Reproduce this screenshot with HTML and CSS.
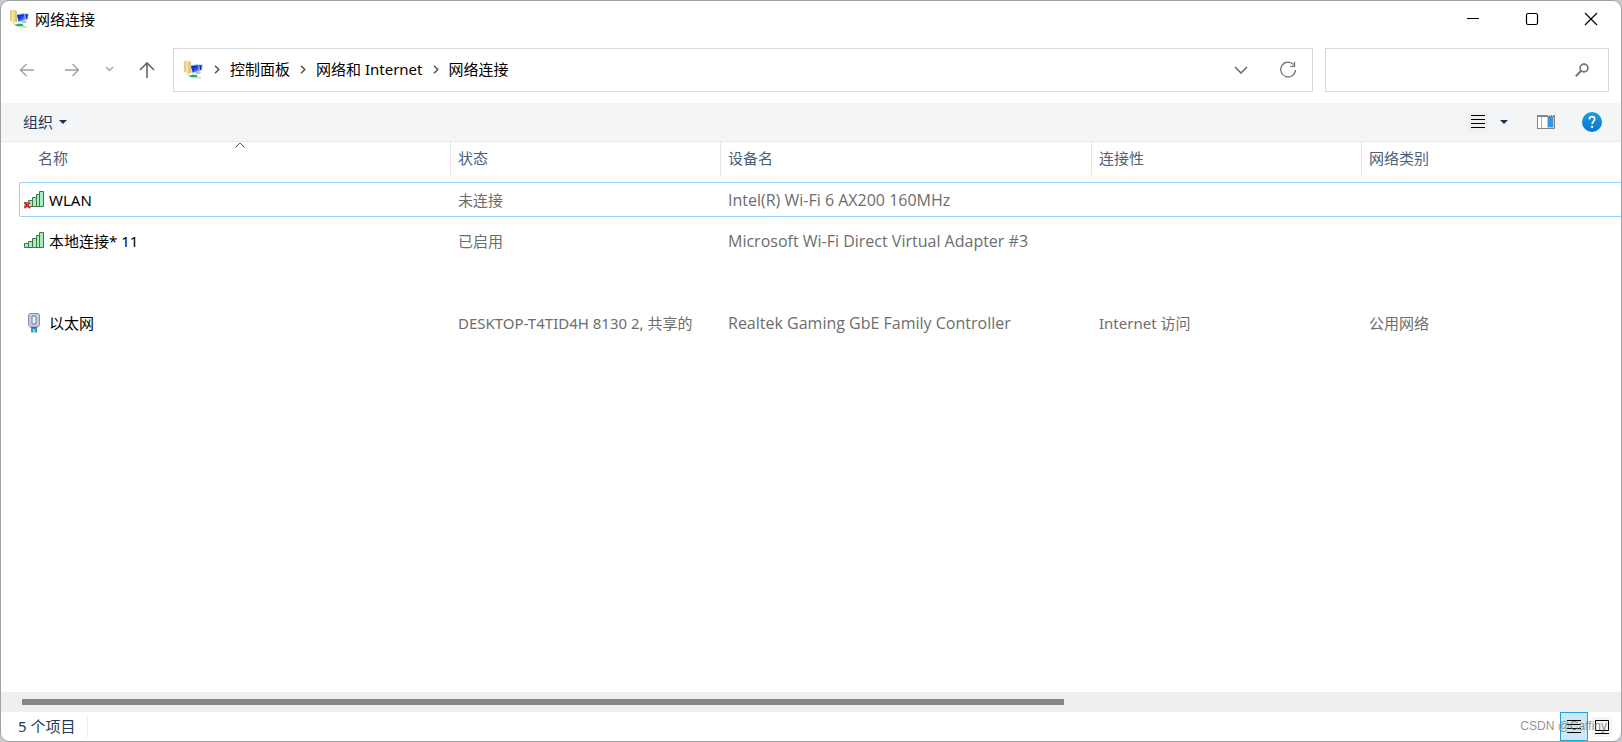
FILE: index.html
```html
<!DOCTYPE html>
<html lang="zh-CN">
<head>
<meta charset="utf-8">
<title>网络连接</title>
<link rel="stylesheet" href="styles.css">
</head>
<body>
<svg class="defs" aria-hidden="true">
  <defs>
    <linearGradient id="folder-fill" x1="0" y1="0" x2="1" y2="0"><stop offset="0" stop-color="#fbeeb0"/><stop offset="1" stop-color="#dcb75c"/></linearGradient>
    <linearGradient id="screen-fill" x1="0" y1="0" x2="1" y2="1"><stop offset="0" stop-color="#0a1a9c"/><stop offset=".5" stop-color="#1c3fe0"/><stop offset="1" stop-color="#9fd0ff"/></linearGradient>
    <linearGradient id="help-fill" x1="0" y1="0" x2="0" y2="1"><stop offset="0" stop-color="#1b9de2"/><stop offset="1" stop-color="#0a74d0"/></linearGradient>
    <symbol id="net-folder" viewBox="0 0 20 20">
      <path d="M0 1h5l1 2v10l-6-1z" fill="#e9cf7c"/>
      <path d="M2 0l5 2v11l-5 1z" fill="url(#folder-fill)"/>
      <path d="M12 4l7 .5-1 6-6 1z" fill="#c3d3ea"/>
      <path d="M13 5l5 .3-.8 4.700-4.200.6z" fill="#1531c4"/>
      <path d="M6 5l9-1 1 7.500-8 2z" fill="#c6d7ee"/>
      <path d="M7 6l7.200-1 1 6-6.600 1.500z" fill="url(#screen-fill)"/>
      <path d="M11 12.500l5-1 1 2-5 1z" fill="#b8c3d2"/>
      <path d="M3 14.500l4 1.500M13 18h4" stroke="#b9c7c2"/>
      <path d="M5 16l4-1.500 4 .8.500 1.500-3.500.8-4-.5z" fill="#20b35c"/>
      <path d="M10 16.500l5 1-3 .5z" fill="#8bdcae"/>
    </symbol>
    <symbol id="bars" viewBox="0 0 20 16">
      <g fill="#a4efbb" stroke="#46714f">
        <path d="M.5 11.500h4v4h-4zM4.500 9.500h4v6h-4zM8.500 6.500h4v9h-4zM12.500 3.500h3v12h-3zM15.500.500h4v15h-4z"/>
      </g>
    </symbol>
    <symbol id="chevron-right" viewBox="0 0 6 9"><path d="M1 .7l3.800 3.800L1 8.300" fill="none" stroke="#555" stroke-width="1.500"/></symbol>
  </defs>
</svg>
<main class="window">
  <header class="titlebar">
    <svg class="net-icon"><use href="#net-folder"/></svg>
    <h1 class="title">网络连接</h1>
    <div class="caption-buttons">
      <button class="caption" aria-label="最小化"><svg width="14" height="14" viewBox="0 0 14 14"><path d="M1 6.500h12" stroke="#000"/></svg></button>
      <button class="caption" aria-label="最大化"><svg width="14" height="14" viewBox="0 0 14 14"><rect x="1.500" y="1.500" width="11" height="11" rx="1.500" fill="none" stroke="#000" stroke-width="1.200"/></svg></button>
      <button class="caption" aria-label="关闭"><svg width="14" height="14" viewBox="0 0 14 14"><path d="M1 1l12 12M13 1L1 13" stroke="#000" stroke-width="1.200"/></svg></button>
    </div>
  </header>

  <nav class="navbar">
    <div class="history">
      <button class="nav-button" aria-label="后退"><svg width="16" height="16" viewBox="0 0 16 16"><path d="M15 8H1.500M7.500 2l-6 6 6 6" fill="none" stroke="#a0a0a0" stroke-width="1.300"/></svg></button>
      <button class="nav-button" aria-label="前进"><svg width="16" height="16" viewBox="0 0 16 16"><path d="M1 8h13.500M8.500 2l6 6-6 6" fill="none" stroke="#a0a0a0" stroke-width="1.300"/></svg></button>
      <button class="nav-button recent" aria-label="最近浏览的位置"><svg width="9" height="16" viewBox="0 0 9 16"><path d="M1 5l3.500 3.500L8 5" fill="none" stroke="#a0a0a0" stroke-width="1.300"/></svg></button>
      <button class="nav-button up" aria-label="上移"><svg width="16" height="18" viewBox="0 0 16 18"><path d="M8 17V2M1 9l7-7 7 7" fill="none" stroke="#686868" stroke-width="1.600"/></svg></button>
    </div>
    <div class="address">
      <svg class="net-icon"><use href="#net-folder"/></svg>
      <ol class="crumbs">
        <li><svg class="crumb-arrow"><use href="#chevron-right"/></svg><a href="#">控制面板</a></li>
        <li><svg class="crumb-arrow"><use href="#chevron-right"/></svg><a href="#">网络和 Internet</a></li>
        <li><svg class="crumb-arrow"><use href="#chevron-right"/></svg><a href="#">网络连接</a></li>
      </ol>
      <button class="address-button" aria-label="以前的位置"><svg width="14" height="8" viewBox="0 0 14 8"><path d="M1 1l6 6 6-6" fill="none" stroke="#666" stroke-width="1.500"/></svg></button>
      <button class="address-button" aria-label="刷新"><svg width="18" height="18" viewBox="0 0 18 18"><path d="M14.500 3.500A7.400 7.400 0 1 0 16.500 9M15.500 1v4.300h-4.300" fill="none" stroke="#737373" stroke-width="1.300"/></svg></button>
    </div>
    <div class="search">
      <input class="search-input" type="text" aria-label="搜索">
      <svg width="14" height="14" viewBox="0 0 14 14"><circle cx="9" cy="5" r="3.900" fill="none" stroke="#737373" stroke-width="1.700"/><path d="M6.200 7.800L.8 13.200" stroke="#737373" stroke-width="2"/></svg>
    </div>
  </nav>

  <div class="toolbar">
    <button class="organize">组织<svg width="8" height="4" viewBox="0 0 8 4"><path d="M0 0h8L4 4z" fill="#1a335c"/></svg></button>
    <div class="tools">
      <button class="tool list" aria-label="更改视图"><svg width="14" height="14" viewBox="0 0 14 14"><path d="M0 .5h14M0 4.500h14M0 8.500h14M0 12.500h14" stroke="#000"/></svg></button>
      <button class="tool more" aria-label="更多选项"><svg width="8" height="4" viewBox="0 0 8 4"><path d="M0 0h8L4 4z" fill="#1a335c"/></svg></button>
      <button class="tool pane" aria-label="预览窗格"><svg width="18" height="14" viewBox="0 0 18 14"><rect width="18" height="14" fill="#858585"/><path d="M1 2h9v11H1z" fill="#fff"/><path d="M4 2h1v11H4z" fill="#aaa"/><path d="M10 2h7v11h-7z" fill="#9fd1f6"/><path d="M11 2h5v10h-5z" fill="#3796e3"/><path d="M11 .5h1m1 0h1m1 0h1" stroke="#fff"/></svg></button>
      <button class="tool help" aria-label="帮助"><svg width="20" height="20" viewBox="0 0 20 20"><circle cx="10" cy="10" r="10" fill="url(#help-fill)"/><path d="M7.300 7.600C7.300 5.600 8.400 4.600 10 4.600s2.700 1 2.700 2.500c0 2.200-2.600 2.300-2.600 5.100" fill="none" stroke="#fff" stroke-width="1.600"/><circle cx="10.100" cy="14.900" r="1.100" fill="#fff"/></svg></button>
    </div>
  </div>

  <section class="content">
    <table class="connections">
      <colgroup><col class="col-name"><col class="col-status"><col class="col-device"><col class="col-status"><col></colgroup>
      <thead>
        <tr>
          <th><div class="head">名称<svg class="sort" width="10" height="6" viewBox="0 0 10 6"><path d="M.5 5.500L5 1l4.500 4.500" fill="none" stroke="#555"/></svg></div></th>
          <th><div class="head">状态</div></th>
          <th><div class="head">设备名</div></th>
          <th><div class="head">连接性</div></th>
          <th><div class="head">网络类别</div></th>
        </tr>
      </thead>
      <tbody>
        <tr class="focused">
          <td><div class="cell"><svg class="item-icon" viewBox="0 0 20 20"><use href="#bars" y="1" width="20" height="16"/><path d="M.5 13l5 5M5.500 13l-5 5" stroke="#fff" stroke-width="3"/><path d="M.5 12.500l5.500 5.500M6 12.500L.5 18" stroke="#cf2027" stroke-width="2"/></svg>WLAN</div></td>
          <td><div class="cell">未连接</div></td>
          <td><div class="cell device">Intel(R) Wi-Fi 6 AX200 160MHz</div></td>
          <td><div class="cell"></div></td>
          <td><div class="cell"></div></td>
        </tr>
        <tr>
          <td><div class="cell"><svg class="item-icon" viewBox="0 0 20 20"><use href="#bars" y="1" width="20" height="16"/></svg>本地连接* 11</div></td>
          <td><div class="cell">已启用</div></td>
          <td><div class="cell device">Microsoft Wi-Fi Direct Virtual Adapter #3</div></td>
          <td><div class="cell"></div></td>
          <td><div class="cell"></div></td>
        </tr>
        <tr>
          <td><div class="cell"></div></td>
          <td><div class="cell"></div></td>
          <td><div class="cell"></div></td>
          <td><div class="cell"></div></td>
          <td><div class="cell"></div></td>
        </tr>
        <tr>
          <td><div class="cell"><svg class="item-icon" viewBox="0 0 20 20"><path d="M4.500 1.500l1-1h9l1 1v11l-1.500 1.500H6l-1.500-1.500z" fill="#c3cedd" stroke="#8594ab"/><path d="M8 3h4v8H8z" fill="#edf2f8" stroke="#6f7e98"/><path d="M7 14h6v2H7z" fill="#4d6b85"/><path d="M7 15h2.500v4.500H7zM10.500 15H13v4.500h-2.500z" fill="#2d9dc4"/></svg>以太网</div></td>
          <td><div class="cell">DESKTOP-T4TID4H 8130 2, 共享的</div></td>
          <td><div class="cell device">Realtek Gaming GbE Family Controller</div></td>
          <td><div class="cell">Internet 访问</div></td>
          <td><div class="cell">公用网络</div></td>
        </tr>
      </tbody>
    </table>
  </section>

  <div class="scrollbar"><div class="thumb"></div></div>

  <footer class="statusbar">
    <span class="count">5 个项目</span>
    <div class="views">
      <button class="view selected" aria-label="详细信息"><svg width="14" height="14" viewBox="0 0 14 14"><path d="M0 .5h14M0 4.500h14M0 8.500h14M0 12.500h14" stroke="#000"/></svg></button>
      <button class="view" aria-label="大图标"><svg width="14" height="14" viewBox="0 0 14 14"><path d="M.5.500h13v10H.5zM0 13.500h14" fill="none" stroke="#000"/></svg></button>
    </div>
    <span class="watermark">CSDN @Caffiny</span>
  </footer>
</main>
</body>
</html>
```
FILE: styles.css
```css
* {
  box-sizing: border-box;
}

body {
  margin: 0;
  background: #c9cacd;
  color: #000;
  font: 15px/20px "Noto Sans", "Noto Sans CJK SC", sans-serif;
}

button {
  display: flex;
  align-items: center;
  justify-content: center;
  padding: 0;
  border: 0;
  background: none;
  color: inherit;
  font: inherit;
}

svg {
  flex: none;
}

.defs {
  position: absolute;
  width: 0;
  height: 0;
}

.window {
  position: relative;
  display: flex;
  flex-direction: column;
  min-height: 100vh;
  overflow: hidden;
  border: 1px solid #a3a3a5;
  border-radius: 9px;
  background: #fff;
}

.titlebar {
  display: flex;
  align-items: center;
  height: 36px;
  padding: 0 1px 0 9px;
}

.net-icon {
  width: 20px;
  height: 20px;
}

.title {
  margin: 0 0 0 5px;
  font-size: 15px;
  font-weight: 400;
}

.caption-buttons {
  display: flex;
  margin-left: auto;
  height: 100%;
}

.caption {
  width: 59px;
}

.navbar {
  display: flex;
  align-items: center;
  gap: 12px;
  padding: 11px 12px 11px 11px;
}

.history {
  display: flex;
  align-items: center;
  gap: 14px;
  width: 149px;
}

.nav-button {
  width: 32px;
  height: 32px;
}

.recent {
  width: 18px;
}

.up {
  width: 30px;
}

.address,
.search {
  display: flex;
  align-items: center;
  height: 44px;
  border: 1px solid #d9d9d9;
}

.address {
  flex: 1;
  padding: 0 1px 0 10px;
}

.crumbs {
  display: flex;
  flex: 1;
  margin: 0;
  padding: 0 0 2px;
  list-style: none;
}

.crumbs li {
  display: flex;
  align-items: center;
}

.crumbs a {
  color: inherit;
  text-decoration: none;
}

.crumb-arrow {
  width: 6px;
  height: 9px;
  margin: 0 10px;
}

.address-button {
  width: 47px;
  height: 42px;
}

.search {
  width: 284px;
  padding-right: 19px;
}

.search-input {
  flex: 1;
  min-width: 0;
  height: 100%;
  border: 0;
  outline: 0;
  background: none;
  font: inherit;
}

.toolbar {
  display: flex;
  align-items: center;
  justify-content: space-between;
  height: 39px;
  padding: 0 19px 0 22px;
  border-bottom: 1px solid #e8e9ea;
  background: #f4f5f7;
  color: #1e395b;
}

.organize {
  gap: 6px;
}

.tools {
  display: flex;
  align-items: center;
}

.tool {
  height: 20px;
}

.list {
  width: 20px;
  background: #f0f0f0;
}

.more {
  width: 32px;
}

.pane {
  width: 52px;
}

.help {
  margin-left: 10px;
}

.content {
  flex: 1;
  overflow: hidden;
}

.connections {
  width: 100%;
  border-spacing: 0;
  table-layout: fixed;
}

.col-name {
  width: 449px;
}

.col-status {
  width: 270px;
}

.col-device {
  width: 371px;
}

.connections th,
.connections td {
  padding: 0;
  text-align: left;
  white-space: nowrap;
}

.connections th {
  padding-bottom: 4px;
  color: #4c607a;
  font-weight: 400;
}

.head {
  position: relative;
  display: flex;
  align-items: center;
  height: 33px;
  padding: 0 0 2px 7px;
  border-left: 1px solid #e5e5e5;
}

.connections th:first-child .head {
  padding-left: 37px;
  border-left: 0;
}

.sort {
  position: absolute;
  top: 0;
  left: 234px;
}

.connections td {
  padding: 3px 0;
  color: #6d6d6d;
}

.connections td:first-child {
  padding-left: 18px;
  color: #000;
}

.cell {
  display: flex;
  align-items: center;
  gap: 5px;
  height: 35px;
  padding-left: 8px;
}

.device {
  font-family: "Open Sans", "Noto Sans CJK SC", sans-serif;
  font-size: 16px;
}

.connections td:first-child .cell {
  padding-left: 5px;
}

.item-icon {
  width: 20px;
  height: 20px;
}

.focused .cell {
  border: solid #99d1ff;
  border-width: 1px 0;
}

.connections .focused td:first-child .cell {
  padding-left: 4px;
  border-left-width: 1px;
  border-radius: 2px 0 0 2px;
}

.scrollbar {
  height: 20px;
  padding: 7px 20px 7px 21px;
  background: #efefef;
}

.thumb {
  width: 66%;
  height: 6px;
  background: #858585;
}

.statusbar {
  position: relative;
  display: flex;
  align-items: center;
  justify-content: space-between;
  height: 29px;
  padding: 0 9px 0 17px;
  color: #1e395b;
}

.count {
  padding: 0 12px 2px 0;
  border-right: 1px solid #f0f0f0;
}

.views {
  display: flex;
  align-items: center;
  gap: 4px;
}

.view {
  width: 20px;
  height: 20px;
  background: #f5f5f5;
}

.selected {
  width: 28px;
  height: 29px;
  border: 1px solid #26a0da;
  background: #cbe8f6;
}

.watermark {
  position: absolute;
  top: 6px;
  right: 14px;
  color: rgba(110, 110, 110, 0.75);
  font: 12px/16px "Liberation Sans", sans-serif;
}
```
